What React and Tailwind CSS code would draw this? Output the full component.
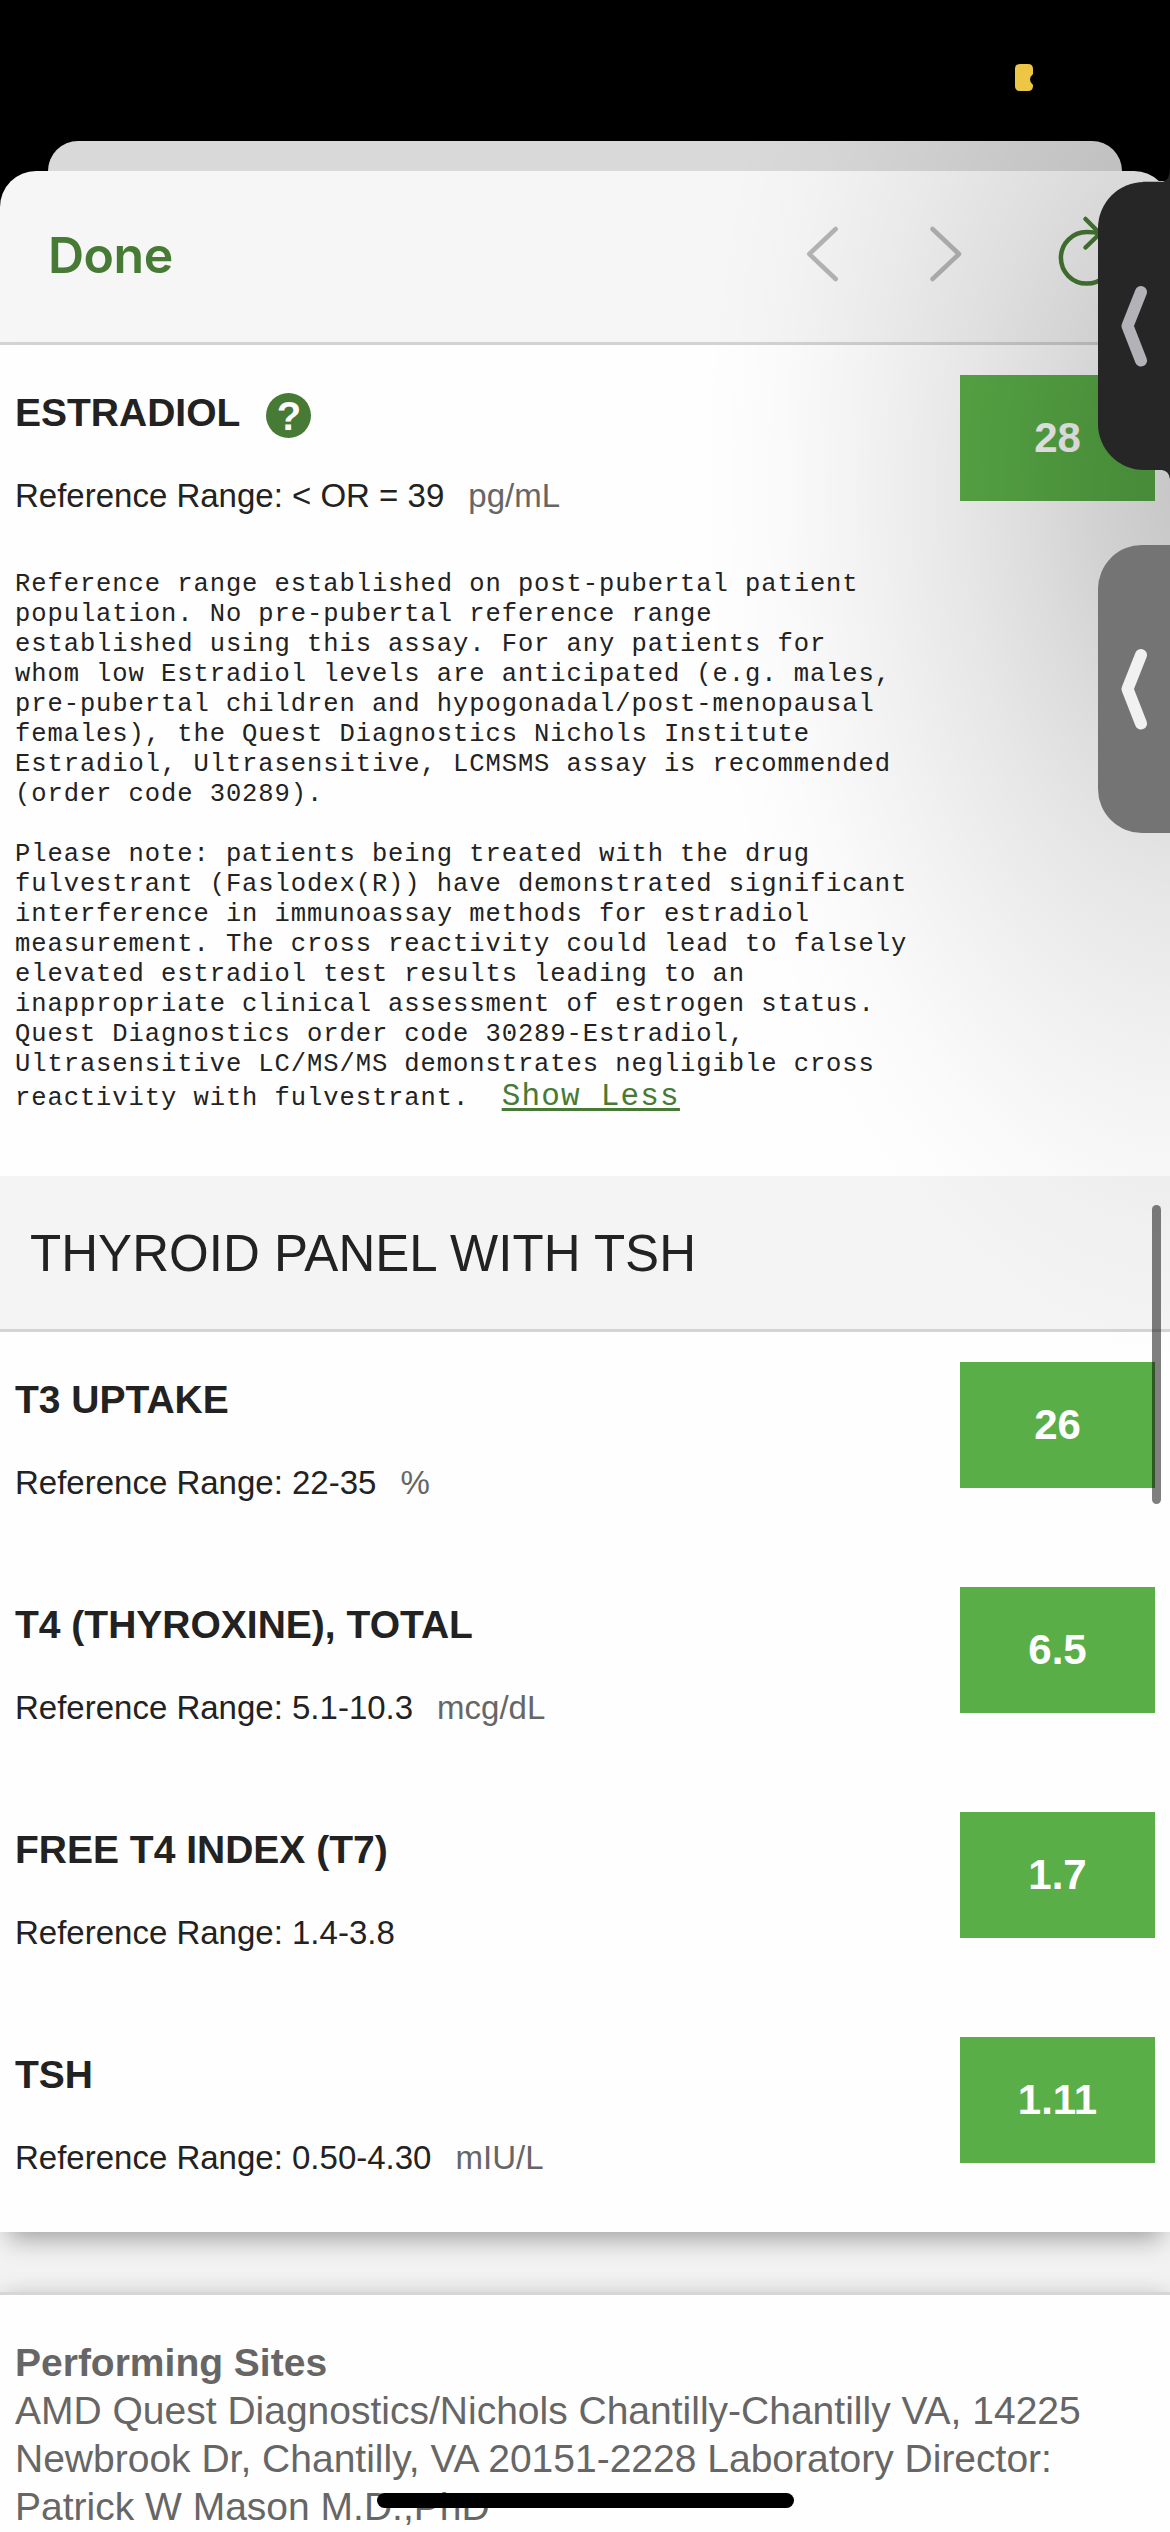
const estradiolNote = [
  'Reference range established on post-pubertal patient',
  'population. No pre-pubertal reference range',
  'established using this assay. For any patients for',
  'whom low Estradiol levels are anticipated (e.g. males,',
  'pre-pubertal children and hypogonadal/post-menopausal',
  'females), the Quest Diagnostics Nichols Institute',
  'Estradiol, Ultrasensitive, LCMSMS assay is recommended',
  '(order code 30289).',
  ' ',
  'Please note: patients being treated with the drug',
  'fulvestrant (Faslodex(R)) have demonstrated significant',
  'interference in immunoassay methods for estradiol',
  'measurement. The cross reactivity could lead to falsely',
  'elevated estradiol test results leading to an',
  'inappropriate clinical assessment of estrogen status.',
  'Quest Diagnostics order code 30289-Estradiol,',
  'Ultrasensitive LC/MS/MS demonstrates negligible cross',
];

const thyroidResults = [
  { name: 'T3 UPTAKE', range: '22-35', unit: '%', value: '26' },
  { name: 'T4 (THYROXINE), TOTAL', range: '5.1-10.3', unit: 'mcg/dL', value: '6.5' },
  { name: 'FREE T4 INDEX (T7)', range: '1.4-3.8', unit: '', value: '1.7' },
  { name: 'TSH', range: '0.50-4.30', unit: 'mIU/L', value: '1.11' },
];

function Toolbar() {
  return (
    <header className="flex h-[174px] shrink-0 items-start justify-between rounded-t-[36px] border-b-[3px] border-[#d4d4d4] bg-[#f6f6f6] pl-[48px]">
      <button className="pt-[54px] font-['Inter'] text-[50px] leading-[60px] font-semibold tracking-[-0.5px] text-[#467a35]">
        Done
      </button>
      <svg width="370" height="171" viewBox="800 171 370 171" fill="none" strokeLinecap="round" strokeLinejoin="round" strokeWidth="4.5">
        <path d="M835.7 229L809.3 254L835.7 279" stroke="#b5b5b5" />
        <path d="M932.5 229L959 254L932.5 279" stroke="#b5b5b5" />
        <path d="M1099 233.5C1096 232.3 1091 232 1086.7 232A25.8 25.8 0 1 0 1112.5 257.8" stroke="#467a35" />
        <path d="M1085.5 219L1100 233.5L1085.5 247.5" stroke="#467a35" />
      </svg>
    </header>
  );
}

function Result({ name, range, unit, value, help }) {
  return (
    <div className="flex h-[225px] items-start justify-between pt-[30px] pr-[15px] pl-[15px]">
      <div>
        <div className="flex h-[72px] items-center gap-[26px] pt-[3px]">
          <h3 className="text-[39px] leading-[48px] font-bold text-[#222]">{name}</h3>
          {help && (
            <span className="mt-[6px] flex size-[45px] items-center justify-center rounded-full bg-[#467a35] text-[40px] leading-none font-bold text-white">
              ?
            </span>
          )}
        </div>
        <p className="mt-[28px] flex gap-[24px] text-[33px] leading-[42px] text-[#222]">
          <span>Reference Range: {range}</span>
          <span className="text-[#666]">{unit}</span>
        </p>
      </div>
      <div className="flex h-[126px] w-[195px] items-center justify-center bg-[#5aae47] text-[42px] leading-none font-bold text-white">
        {value}
      </div>
    </div>
  );
}

function SideTab({ className, stroke }) {
  return (
    <div className={className}>
      <svg width="72" height="288" viewBox="0 0 72 288" fill="none">
        <path d="M43 110L29.5 144L43 178.500" stroke={stroke} strokeWidth="12" strokeLinecap="round" strokeLinejoin="round" />
      </svg>
    </div>
  );
}

export default function App() {
  return (
    <div className="relative flex h-[2532px] w-[1170px] flex-col overflow-hidden bg-black pt-[141px] font-['Liberation_Sans',sans-serif]">
      <div className="mx-[48px] h-[30px] shrink-0 rounded-t-[30px] bg-[#d9d9d9]" />

      <Toolbar />

      <main className="flex flex-1 flex-col bg-[#f2f2f2]">
        <section className="relative bg-[#fefefe] shadow-[0_15px_24px_-9px_rgba(0,0,0,0.36)]">
          <Result name="ESTRADIOL" range="< OR = 39" unit="pg/mL" value="28" help />

          <div className="h-[606px] pl-[15px] font-['Liberation_Mono',monospace] text-[25.5px] leading-[30px] tracking-[0.92px] text-[#222]">
            {estradiolNote.map((line, i) => (
              <p key={i} className="whitespace-pre">{line}</p>
            ))}
            <p className="leading-[34px] whitespace-pre">
              {'reactivity with fulvestrant.  '}
              <a className="text-[31px] tracking-[1.2px] text-[#467a35] underline decoration-[3px] underline-offset-[3px]">Show Less</a>
            </p>
          </div>

          <h2 className="flex h-[156px] items-center border-b-[3px] border-[#d4d4d4] bg-[#f4f4f4] pt-[4px] pl-[30px] text-[51px] tracking-[0.05px] text-[#222]">
            THYROID PANEL WITH TSH
          </h2>

          {thyroidResults.map((r) => (
            <Result key={r.name} {...r} />
          ))}
        </section>

        <section className="mt-[60px] flex-1 border-t-[3px] border-[#d6d6d6] bg-[#fefefe] px-[15px] pt-[44px] text-[39px] leading-[48px] text-[#666] shadow-[0_0_21px_-3px_rgba(0,0,0,0.22)]">
          <h4 className="font-bold">Performing Sites</h4>
          <p>
            AMD Quest Diagnostics/Nichols Chantilly-Chantilly VA, 14225
            <br />
            Newbrook Dr, Chantilly, VA 20151-2228 Laboratory Director:
            <br />
            Patrick W Mason M.D.,PhD
          </p>
        </section>
      </main>

      {/* scroll thumb and home indicator */}
      <div className="absolute top-[1205px] left-[1152px] h-[299px] w-[9px] rounded-full bg-black/50" />
      <div className="absolute top-[2493px] left-[377px] h-[15px] w-[417px] rounded-full bg-black" />

      {/* shade cast by the edge tabs */}
      <div className="pointer-events-none absolute inset-0 bg-[radial-gradient(490px_880px_at_1190px_490px,rgba(0,0,0,0.225)_0%,rgba(0,0,0,0.172)_20%,rgba(0,0,0,0.135)_32%,rgba(0,0,0,0.095)_46%,rgba(0,0,0,0.05)_65%,rgba(0,0,0,0.015)_84%,rgba(0,0,0,0)_100%)]" />

      <svg className="absolute top-[64px] left-[1015px]" width="18" height="27" viewBox="0 0 18 27">
        <path d="M5 0H13Q18 0 18 5V10Q12 15.500 18 21V22Q18 27 13 27H5Q0 27 0 22V5Q0 0 5 0Z" fill="#ecc644" />
      </svg>

      {/* small flares where the dark tab meets the screen edge */}
      <svg className="absolute top-[168px] left-[1140px]" width="30" height="314" viewBox="0 0 30 314">
        <path d="M3 13H26V15H3Z" fill="#a9a9a9" />
        <path d="M30 0V14H23Q30 12 30 0Z" fill="#262626" />
        <path d="M20 302H30V311Q29 303 22 302Z" fill="#262626" />
      </svg>
      <SideTab className="absolute top-[182px] left-[1098px] h-[288px] w-[72px] rounded-l-[46px] bg-[#262626]" stroke="#b3b2b9" />
      <SideTab className="absolute top-[545px] left-[1098px] h-[288px] w-[72px] rounded-l-[44px] bg-[#747474]" stroke="#f1f1f1" />
    </div>
  );
}
